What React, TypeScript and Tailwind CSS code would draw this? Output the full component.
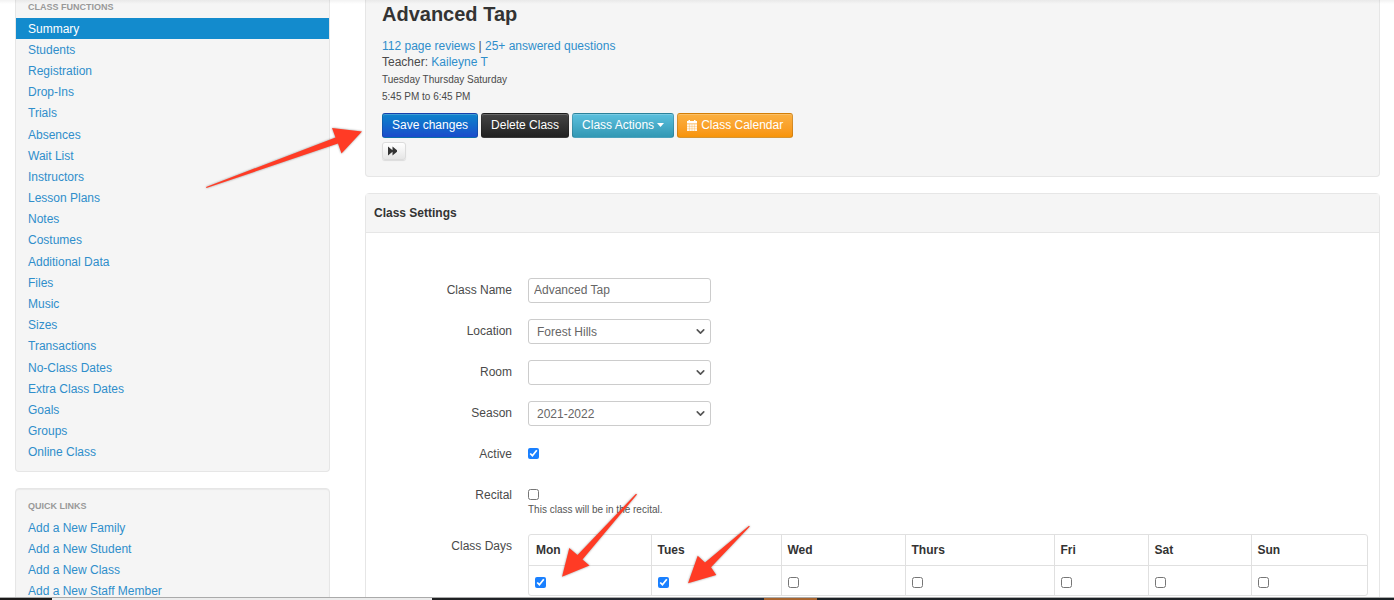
// Class summary page: sidebar navigation, class header with its actions,
// and the class settings form.

import type { ReactNode } from 'react';
import { ChevronDown } from 'lucide-react';

const CLASS_FUNCTIONS = [
  'Summary',
  'Students',
  'Registration',
  'Drop-Ins',
  'Trials',
  'Absences',
  'Wait List',
  'Instructors',
  'Lesson Plans',
  'Notes',
  'Costumes',
  'Additional Data',
  'Files',
  'Music',
  'Sizes',
  'Transactions',
  'No-Class Dates',
  'Extra Class Dates',
  'Goals',
  'Groups',
  'Online Class',
];

const QUICK_LINKS = [
  'Add a New Family',
  'Add a New Student',
  'Add a New Class',
  'Add a New Staff Member',
];

const DAYS = [
  { name: 'Mon', width: 'w-[122px]', on: true },
  { name: 'Tues', width: 'w-[130px]', on: true },
  { name: 'Wed', width: 'w-[124px]', on: false },
  { name: 'Thurs', width: 'w-[149px]', on: false },
  { name: 'Fri', width: 'w-[94px]', on: false },
  { name: 'Sat', width: 'w-[103px]', on: false },
  { name: 'Sun', width: 'w-[116px]', on: false },
];

export default function App() {
  return (
    <div className="relative h-screen overflow-hidden bg-white font-['Liberation_Sans',Arial,sans-serif] text-[12px] leading-4 text-[#4a4a4a]">
      <div className="flex items-start gap-[35px] pl-[15px] pr-[14px]">
        <aside className="w-[315px] shrink-0">
          <nav className="mb-4 rounded-b border border-t-0 border-[#e6e6e6] bg-[#f5f5f5] pb-2">
            <NavHeader>Class Functions</NavHeader>
            <ul className="flex min-h-[445px] flex-col">
              {CLASS_FUNCTIONS.map((name, i) => (
                <NavItem key={name} name={name} active={i === 0} />
              ))}
            </ul>
          </nav>
          <nav className="rounded border border-[#e6e6e6] bg-[#f5f5f5] pt-[10px] shadow-[inset_0_1px_1px_rgba(0,0,0,0.05)]">
            <NavHeader>Quick Links</NavHeader>
            <ul className="flex min-h-[85px] flex-col">
              {QUICK_LINKS.map((name) => (
                <NavItem key={name} name={name} />
              ))}
            </ul>
          </nav>
        </aside>

        <main className="min-w-0 flex-1">
          <ClassHeader />
          <ClassSettings />
        </main>
      </div>

      <div className="absolute inset-x-0 top-0 h-1 bg-linear-to-b from-black/5 to-transparent" />
      <div className="absolute inset-x-0 bottom-0 flex h-[3px] border-t border-[#aaa]">
        <div className="w-[52px] bg-[#1c1a1a]" />
        <div className="w-[380px] bg-[#ececec]" />
        <div className="w-[332px] bg-linear-to-r from-[#1f2022] to-[#232c3a]" />
        <div className="w-[53px] bg-[#a8652f]" />
        <div className="flex-1 bg-[#1c2125]" />
      </div>
      <Arrows />
    </div>
  );
}

function NavHeader({ children }: { children: ReactNode }) {
  return (
    <h2 className="px-3 pb-[3px] text-[9px] font-bold uppercase leading-[15px] text-[#999]">
      {children}
    </h2>
  );
}

function NavItem({ name, active = false }: { name: string; active?: boolean }) {
  return (
    <li className="flex flex-1">
      <a
        href="#"
        className={`flex flex-1 items-center px-3 ${
          active ? 'bg-[#138bcd] text-white' : 'text-[#2f8ecb]'
        }`}
      >
        {name}
      </a>
    </li>
  );
}

function ClassHeader() {
  const button =
    'flex h-[25px] items-center rounded-[3px] border border-black/15 px-[9px] pb-px text-white shadow-[inset_0_1px_0_rgba(255,255,255,0.2)]';

  return (
    <section className="mb-4 rounded-b border border-t-0 border-[#e6e6e6] bg-[#f5f5f5] px-4 pb-4 pt-[2px]">
      <h1 className="mb-3 text-[20px] font-bold leading-6 text-[#333]">Advanced Tap</h1>
      <p>
        <a href="#" className="text-[#2f8ecb]">112 page reviews</a> |{' '}
        <a href="#" className="text-[#2f8ecb]">25+ answered questions</a>
      </p>
      <p>
        Teacher: <a href="#" className="text-[#2f8ecb]">Kaileyne T</a>
      </p>
      <div className="mt-px text-[10px] leading-[17px]">
        <p>Tuesday Thursday Saturday</p>
        <p>5:45 PM to 6:45 PM</p>
      </div>

      <div className="mt-2 flex flex-wrap gap-[3px]">
        <button type="button" className={`${button} bg-linear-to-b from-[#0f83cb] to-[#1b4bcb]`}>
          Save changes
        </button>
        <button type="button" className={`${button} bg-linear-to-b from-[#444] to-[#222]`}>
          Delete Class
        </button>
        <button type="button" className={`${button} gap-[3px] bg-linear-to-b from-[#5bc0de] to-[#3298b4]`}>
          Class Actions
          <svg width="7" height="4" viewBox="0 0 7 4" fill="currentColor" aria-hidden="true">
            <path d="M0 0h7L3.5 4z" />
          </svg>
        </button>
        <button type="button" className={`${button} gap-1 bg-linear-to-b from-[#fbb040] to-[#f89406]`}>
          <CalendarIcon />
          Class Calendar
        </button>
      </div>
      <button
        type="button"
        aria-label="Next class"
        className="mt-1 flex h-[18px] w-6 items-center justify-center rounded-[3px] border border-[#dcdcdc] bg-linear-to-b from-white to-[#e6e6e6] pr-[2px] text-[#333] shadow-[0_1px_1px_rgba(0,0,0,0.1)]"
      >
        <svg width="10" height="10" viewBox="0 0 10 10" fill="currentColor" aria-hidden="true">
          <path d="M0 0.5L4.5 4.2V0.5L9 4.3V5.7L4.5 9.5V5.8L0 9.5z" />
        </svg>
      </button>
    </section>
  );
}

function CalendarIcon() {
  return (
    <svg width="10" height="11" viewBox="0 0 10 11" aria-hidden="true">
      <path d="M0 1h1.5V0h1.5v1h4V0h1.5v1H10v2.500H0z" fill="white" />
      <path d="M0 4.200h10V11H0z" fill="white" fillOpacity="0.9" />
      <path d="M0 6.500h10M0 8.700h10M2.500 4.200V11M5 4.200V11M7.500 4.200V11" stroke="#f9a52c" strokeWidth="0.3" />
    </svg>
  );
}

function ClassSettings() {
  return (
    <section className="rounded border border-[#e6e6e6]">
      <h2 className="border-b border-[#e6e6e6] bg-[#f5f5f5] px-2 py-[11px] font-bold text-[#333]">
        Class Settings
      </h2>
      <form className="flex flex-col gap-4 pb-8 pl-[9px] pr-[13px] pt-[45px]">
        <Field id="class-name" label="Class Name">
          <input
            id="class-name"
            type="text"
            defaultValue="Advanced Tap"
            className="h-[25px] w-[183px] rounded-[3px] border border-[#ccc] bg-white px-[5px] pb-px text-[#666]"
          />
        </Field>
        <SelectField id="location" label="Location" value="Forest Hills" />
        <SelectField id="room" label="Room" value="" />
        <SelectField id="season" label="Season" value="2021-2022" />
        <Field id="active" label="Active">
          <input id="active" type="checkbox" defaultChecked className="mt-[6px] block size-[11px] accent-[#1a80ff]" />
        </Field>
        <Field id="recital" label="Recital">
          <input id="recital" type="checkbox" className="mt-[6px] block size-[11px]" />
          <p className="mt-1 text-[10px] leading-3 text-[#555]">
            This class will be in the recital.
          </p>
        </Field>
        <div className="flex gap-4 pt-[2px]" role="group" aria-labelledby="class-days">
          <span id="class-days" className="w-[137px] shrink-0 pt-1 text-right">
            Class Days
          </span>
          <DaysTable />
        </div>
      </form>
    </section>
  );
}

function Field({ id, label, children }: { id: string; label: string; children: ReactNode }) {
  return (
    <div className="flex gap-4">
      <label htmlFor={id} className="w-[137px] shrink-0 pt-1 text-right">
        {label}
      </label>
      <div className="min-h-[25px]">{children}</div>
    </div>
  );
}

function SelectField({ id, label, value }: { id: string; label: string; value: string }) {
  return (
    <Field id={id} label={label}>
      <div className="relative">
        <select
          id={id}
          className="block h-[25px] w-[183px] appearance-none rounded-[3px] border border-[#ccc] bg-white px-2 text-[#666]"
        >
          <option>{value}</option>
        </select>
        <ChevronDown
          size={13}
          strokeWidth={3}
          className="pointer-events-none absolute right-1 top-[6px] text-[#555]"
        />
      </div>
    </Field>
  );
}

function DaysTable() {
  return (
    <div className="flex-1 rounded-[3px] border border-[#e0e0e0]">
      <table className="w-full table-fixed">
        <thead>
          <tr>
            {DAYS.map((d) => (
              <th
                key={d.name}
                scope="col"
                className={`${d.width} h-[30px] border-b border-l border-[#e0e0e0] px-[6px] text-left font-bold text-[#333] first:border-l-0 first:pl-[7px]`}
              >
                {d.name}
              </th>
            ))}
          </tr>
        </thead>
        <tbody>
          <tr>
            {DAYS.map((d) => (
              <td key={d.name} className="h-[30px] border-l border-[#e0e0e0] px-[6px] pt-1 first:border-l-0">
                <input
                  type="checkbox"
                  aria-label={d.name}
                  defaultChecked={d.on}
                  className="block size-[11px] accent-[#1a80ff]"
                />
              </td>
            ))}
          </tr>
        </tbody>
      </table>
    </div>
  );
}

// Red pointers at the save button and the two ticked days.
function Arrows() {
  return (
    <svg
      width="1394"
      height="600"
      viewBox="0 0 1394 600"
      fill="#ff3b25"
      className="pointer-events-none absolute left-0 top-0 drop-shadow-[0_0_1px_rgba(0,0,0,0.4)]"
      aria-hidden="true"
    >
      <path d="M206 187L335.5 137.5L332 128L362 131.5L341.5 153.5L338 143.5L206.500 188z" />
      <path d="M636 493.800L577.500 555L569.300 548L562 576.700L589.500 565.500L582.500 559.500L637 494.500z" />
      <path d="M749 525.800L705 562.500L697.700 555.700L688 583.300L716.300 575L711 567.300L749.800 526.500z" />
    </svg>
  );
}
